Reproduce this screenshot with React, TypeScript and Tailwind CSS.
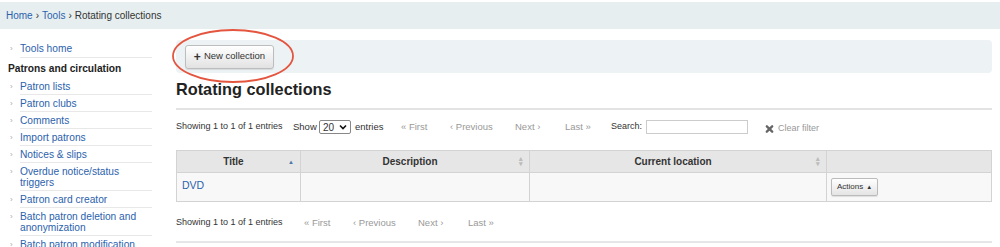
import React from "react";

const sideLinks = [
    "Patron lists",
    "Patron clubs",
    "Comments",
    "Import patrons",
    "Notices & slips",
    "Overdue notice/status triggers",
    "Patron card creator",
    "Batch patron deletion and anonymization",
    "Batch patron modification",
];

function SideItem({ label }: { label: string }) {
    return (
        <li className="flex">
            <span className="w-[12px] shrink-0 pl-[2px] pt-[3px] text-[8px] leading-[11px] text-[#aaa]">›</span>
            <a className="flex-1 border-b border-[#e8e8e8] pt-[3px] pb-[2px] leading-[11px] text-[#2b62ad] text-[10.2px]">{label}</a>
        </li>
    );
}

function Pager() {
    return (
        <div className="flex items-center text-[9.5px] text-[#999]">
            <span className="w-[49px]">« First</span>
            <span className="w-[65px]">‹ Previous</span>
            <span className="w-[50px]">Next ›</span>
            <span className="w-[46px]">Last »</span>
        </div>
    );
}

export default function App() {
    return (
        <div className="relative w-[1000px] h-[247px] overflow-hidden bg-white pt-[2px] text-[#333]" style={{ fontFamily: '"Liberation Sans", Arial, sans-serif' }}>
            <div className="h-[27px] bg-[#e6eeef] pl-[6px] flex items-center text-[10px]">
                <a className="text-[#2b62ad]">Home</a>
                <span className="mx-[3px]">›</span>
                <a className="text-[#2b62ad]">Tools</a>
                <span className="mx-[3px]">›</span>
                <span>Rotating collections</span>
            </div>

            <div className="flex pt-[11px]">
                <aside className="w-[152px] pl-[8px] shrink-0">
                    <ul>
                        <li className="flex">
                            <span className="w-[12px] shrink-0 pl-[2px] pt-[3px] text-[8px] leading-[11px] text-[#aaa]">›</span>
                            <a className="flex-1 border-b border-[#e8e8e8] pt-[3px] pb-[3px] leading-[11px] text-[#2b62ad] text-[10.2px]">Tools home</a>
                        </li>
                    </ul>
                    <h5 className="mt-[5px] mb-[3px] font-bold text-[10.2px] leading-[12px] text-[#222]">Patrons and circulation</h5>
                    <ul>
                        {sideLinks.map(l => <SideItem key={l} label={l} />)}
                    </ul>
                </aside>

                <main className="ml-[24px] w-[816px]">
                    <div className="h-[33px] rounded-[4px] bg-[#edf2f4] flex items-center pl-[9px]">
                        <button className="h-[24px] w-[89px] justify-center rounded-[3px] border border-[#bdbdbd] bg-gradient-to-b from-white to-[#e2e2e2] text-[9.5px] text-[#333] flex items-center gap-[3px] shadow-[0_1px_1px_rgba(0,0,0,0.1)]">
                            <span className="font-bold text-[12px] leading-none">+</span>New collection
                        </button>
                    </div>
                    <h1 className="mt-[7px] text-[16.3px] font-bold leading-[18px] text-[#222]">Rotating collections</h1>
                    <div className="mt-[10px] h-[2px] bg-[#e3e3e3]" />

                    <div className="mt-[8px] h-[18px] flex items-center text-[9px] text-[#333]">
                        <span className="w-[117px]">Showing 1 to 1 of 1 entries</span>
                        <span className="w-[26px] text-[9.5px]">Show</span>
                        <span className="w-[32px] h-[14px] border border-[#888] rounded-[2px] flex items-center justify-between px-[3px] text-[10px]">
                            20
                            <svg width="8" height="6" viewBox="0 0 8 6"><path d="M1 1.5 L4 4.5 L7 1.5" fill="none" stroke="#111" strokeWidth="1.6" /></svg>
                        </span>
                        <span className="ml-[4px] w-[46px] text-[9.5px]">entries</span>
                        <Pager />
                        <span className="w-[35px]">Search:</span>
                        <span className="w-[102px] h-[14px] border border-[#ccc]" />
                        <span className="ml-[17px] mt-[3px] flex items-center gap-[4px] text-[#999]">
                            <svg width="9" height="8" viewBox="0 0 10 9"><path d="M2 1.5 L8 7.5 M8 1.5 L2 7.5" stroke="#666" strokeWidth="2.6" strokeLinecap="round" /></svg>
                            Clear filter
                        </span>
                    </div>

                    <table className="mt-[14px] w-full border-collapse text-[10px]">
                        <thead>
                            <tr className="h-[22px] bg-[#e6e6e6]">
                                <th className="w-[124px] border border-[#d3d3d3] font-bold relative pr-[10px]">Title<span className="absolute right-[6px] top-[7px] text-[6px] text-[#4a79a8]">▲</span></th>
                                <th className="w-[229px] border border-[#d3d3d3] font-bold relative pr-[10px]">Description<span className="absolute right-[6px] top-[5px] text-[7px] text-[#bbb] leading-[5px] flex flex-col"><span>▴</span><span>▾</span></span></th>
                                <th className="w-[297px] border border-[#d3d3d3] font-bold relative pr-[10px]">Current location<span className="absolute right-[6px] top-[5px] text-[7px] text-[#bbb] leading-[5px] flex flex-col"><span>▴</span><span>▾</span></span></th>
                                <th className="border border-[#d3d3d3]" />
                            </tr>
                        </thead>
                        <tbody>
                            <tr className="h-[29px] bg-[#f8f8f8]">
                                <td className="border border-[#d3d3d3] pl-[5px] pb-[3px] text-[#2b62ad] text-[10.5px]">DVD</td>
                                <td className="border border-[#d3d3d3]" />
                                <td className="border border-[#d3d3d3]" />
                                <td className="border border-[#d3d3d3] pl-[4px]">
                                    <button className="h-[18px] px-[5px] rounded-[2px] border border-[#bbb] bg-gradient-to-b from-white to-[#e4e4e4] text-[8px] text-[#333] flex items-center gap-[3px] shadow-[0_1px_1px_rgba(0,0,0,0.1)]">
                                        Actions<span className="text-[6px]">▲</span>
                                    </button>
                                </td>
                            </tr>
                        </tbody>
                    </table>

                    <div className="mt-[12px] h-[18px] flex items-center text-[9px] text-[#333]">
                        <span className="w-[128px]">Showing 1 to 1 of 1 entries</span>
                        <Pager />
                    </div>
                    <div className="mt-[9px] h-[2px] bg-[#e6e6e6]" />
                </main>
            </div>

            <svg className="absolute left-[170px] top-[28px]" width="128" height="58" viewBox="0 0 128 58">
                <ellipse cx="63" cy="28" rx="60" ry="26" fill="none" stroke="#e4553f" strokeWidth="1.8" />
            </svg>
        </div>
    );
}
